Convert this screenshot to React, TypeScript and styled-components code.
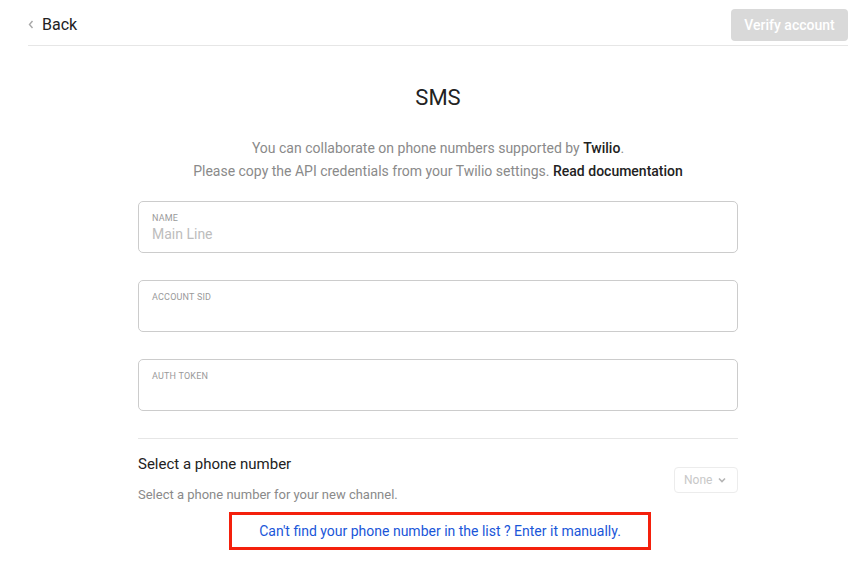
import React from 'react';
import styled, { createGlobalStyle } from 'styled-components';

const GlobalStyle = createGlobalStyle`
  body {
    margin: 0;
    background: #fff;
    font-family: Roboto, "Noto Sans", "Liberation Sans", sans-serif;
    color: #222;
  }
`;

const Page = styled.div`
  margin: 0 9px 0 28px;
`;

const Header = styled.header`
  display: flex;
  align-items: center;
  justify-content: space-between;
  height: 46px;
  padding-top: 4px;
  border-bottom: 1px solid #e6e6e6;
  box-sizing: border-box;
`;

const BackLink = styled.a`
  display: flex;
  align-items: center;
  gap: 8px;
  font-size: 16px;
  color: #222;
  text-decoration: none;
  cursor: pointer;
`;

const VerifyButton = styled.button`
  width: 117px;
  height: 32px;
  border: none;
  border-radius: 4px;
  background: #d9d9d9;
  color: #fff;
  font-family: inherit;
  font-size: 14px;
  font-weight: 500;
`;

const Content = styled.main`
  width: 600px;
  margin: 0 auto;
  display: flex;
  flex-direction: column;
`;

const Title = styled.h1`
  margin: 39px 0 0;
  text-align: center;
  font-size: 22px;
  font-weight: 400;
  color: #222;
`;

const Intro = styled.p`
  margin: 27px 0 0;
  text-align: center;
  font-size: 14px;
  line-height: 23px;
  color: #8a8a8a;

  b {
    font-weight: 500;
    color: #222;
  }
`;

const Fields = styled.div`
  display: flex;
  flex-direction: column;
  gap: 27px;
  margin-top: 18px;
`;

const Field = styled.label`
  display: flex;
  flex-direction: column;
  height: 52px;
  box-sizing: border-box;
  padding: 11px 13px 0;
  border: 1px solid #cccccc;
  border-radius: 5px;
`;

const FieldLabel = styled.span`
  font-size: 9px;
  letter-spacing: 0.2px;
  text-transform: uppercase;
  color: #9a9a9a;
`;

const FieldInput = styled.input`
  border: none;
  outline: none;
  padding: 0;
  margin-top: 3px;
  font-family: inherit;
  font-size: 14px;
  color: #222;

  &::placeholder {
    color: #bdbdbd;
  }
`;

const Divider = styled.hr`
  width: 100%;
  margin: 27px 0 0;
  border: none;
  border-top: 1px solid #e6e6e6;
`;

const SelectRow = styled.div`
  display: flex;
  align-items: center;
  justify-content: space-between;
  margin-top: 16px;
`;

const SelectText = styled.div`
  display: flex;
  flex-direction: column;
  gap: 14px;
`;

const SelectTitle = styled.span`
  font-size: 15px;
  color: #222;
`;

const SelectHint = styled.span`
  font-size: 13px;
  color: #8a8a8a;
`;

const NoneSelect = styled.div`
  display: flex;
  align-items: center;
  gap: 6px;
  width: 64px;
  height: 26px;
  box-sizing: border-box;
  padding: 0 9px;
  margin-top: 2px;
  border: 1px solid #ececec;
  border-radius: 4px;
  font-size: 12px;
  color: #c8c8c8;
`;

const ManualBox = styled.div`
  align-self: center;
  margin: 10px 0 0;
  width: 422px;
  height: 38px;
  box-sizing: border-box;
  border: 3px solid #f4200c;
  display: flex;
  align-items: center;
  justify-content: center;
  transform: translateX(2px);
`;

const ManualLink = styled.a`
  font-size: 14px;
  color: #1a56d9;
  text-decoration: none;
  cursor: pointer;
`;

const App: React.FC = () => {
  return (
    <>
      <GlobalStyle />
      <Page>
        <Header>
          <BackLink>
            <svg width="6" height="9" viewBox="0 0 6 9">
              <path d="M4.5 1 L1.5 4.5 L4.5 8" fill="none" stroke="#a8a8a8" strokeWidth="1.4" />
            </svg>
            Back
          </BackLink>
          <VerifyButton>Verify account</VerifyButton>
        </Header>
        <Content>
          <Title>SMS</Title>
          <Intro>
            You can collaborate on phone numbers supported by <b>Twilio</b>.
            <br />
            Please copy the API credentials from your Twilio settings. <b>Read documentation</b>
          </Intro>
          <Fields>
            <Field>
              <FieldLabel>Name</FieldLabel>
              <FieldInput placeholder="Main Line" />
            </Field>
            <Field>
              <FieldLabel>Account SID</FieldLabel>
              <FieldInput />
            </Field>
            <Field>
              <FieldLabel>Auth Token</FieldLabel>
              <FieldInput />
            </Field>
          </Fields>
          <Divider />
          <SelectRow>
            <SelectText>
              <SelectTitle>Select a phone number</SelectTitle>
              <SelectHint>Select a phone number for your new channel.</SelectHint>
            </SelectText>
            <NoneSelect>
              None
              <svg width="8" height="6" viewBox="0 0 8 6">
                <path d="M1 1.5 L4 4.5 L7 1.5" fill="none" stroke="#b5b5b5" strokeWidth="1.6" />
              </svg>
            </NoneSelect>
          </SelectRow>
          <ManualBox>
            <ManualLink>Can't find your phone number in the list ? Enter it manually.</ManualLink>
          </ManualBox>
        </Content>
      </Page>
    </>
  );
};

export default App;
